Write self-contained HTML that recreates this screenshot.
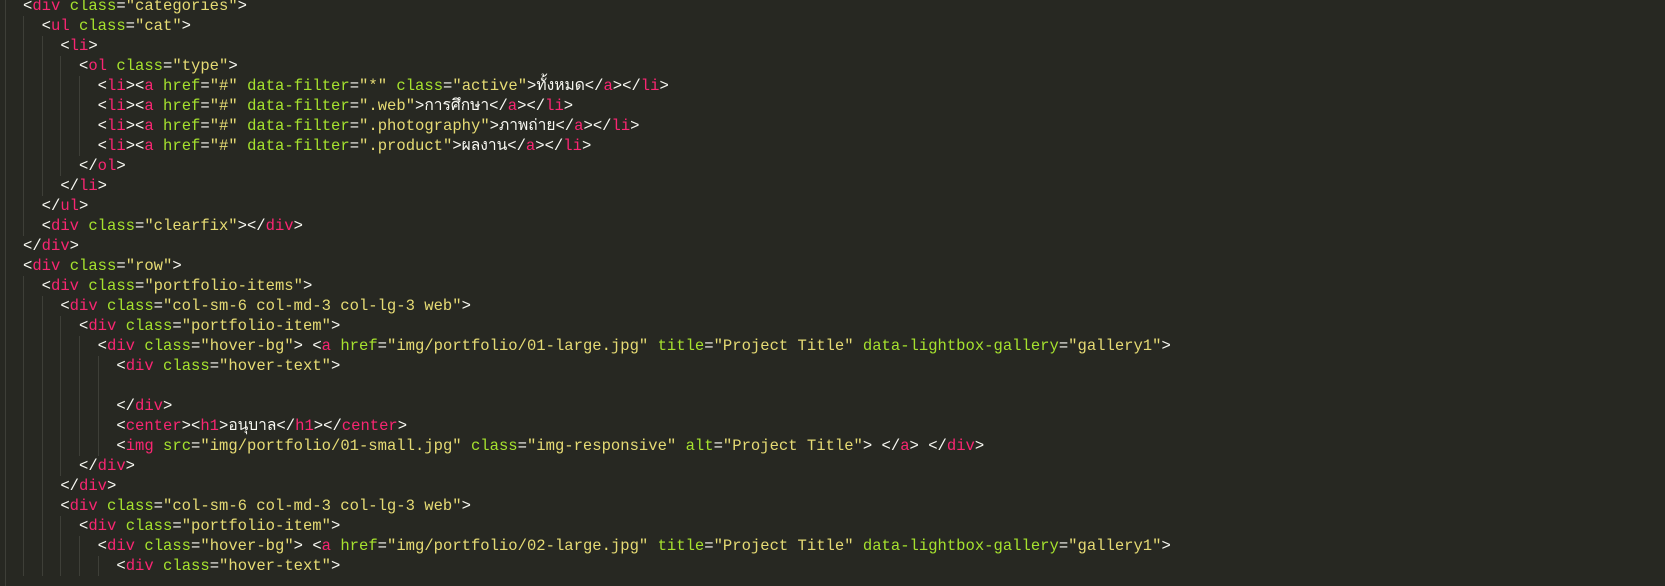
<!DOCTYPE html>
<html><head><meta charset="utf-8"><style>
html,body{margin:0;padding:0;background:#272822;width:1665px;height:586px;overflow:hidden}
#c{position:absolute;left:0;top:-4px;width:1665px}
.l{height:20px;line-height:20px;white-space:pre;font-family:"Liberation Mono","DejaVu Sans Mono",monospace;font-size:15.56px;color:#f8f8f2;position:relative}
.g{position:absolute;top:0;height:20px;width:1px;background:#3e3f38}
.t{color:#f92672}.a{color:#a6e22e}.s{color:#e6db74}
</style></head><body>
<div class="g" style="left:5px;top:0;height:586px;position:absolute"></div>
<div id="c"></div>
<script>
const L=[
[0,'&lt;<span class=t>div</span> <span class=a>class</span>=<span class=s>"categories"</span>&gt;'],
[1,'&lt;<span class=t>ul</span> <span class=a>class</span>=<span class=s>"cat"</span>&gt;'],
[2,'&lt;<span class=t>li</span>&gt;'],
[3,'&lt;<span class=t>ol</span> <span class=a>class</span>=<span class=s>"type"</span>&gt;'],
[4,'&lt;<span class=t>li</span>&gt;&lt;<span class=t>a</span> <span class=a>href</span>=<span class=s>"#"</span> <span class=a>data-filter</span>=<span class=s>"*"</span> <span class=a>class</span>=<span class=s>"active"</span>&gt;ทั้งหมด&lt;/<span class=t>a</span>&gt;&lt;/<span class=t>li</span>&gt;'],
[4,'&lt;<span class=t>li</span>&gt;&lt;<span class=t>a</span> <span class=a>href</span>=<span class=s>"#"</span> <span class=a>data-filter</span>=<span class=s>".web"</span>&gt;การศึกษา&lt;/<span class=t>a</span>&gt;&lt;/<span class=t>li</span>&gt;'],
[4,'&lt;<span class=t>li</span>&gt;&lt;<span class=t>a</span> <span class=a>href</span>=<span class=s>"#"</span> <span class=a>data-filter</span>=<span class=s>".photography"</span>&gt;ภาพถ่าย&lt;/<span class=t>a</span>&gt;&lt;/<span class=t>li</span>&gt;'],
[4,'&lt;<span class=t>li</span>&gt;&lt;<span class=t>a</span> <span class=a>href</span>=<span class=s>"#"</span> <span class=a>data-filter</span>=<span class=s>".product"</span>&gt;ผลงาน&lt;/<span class=t>a</span>&gt;&lt;/<span class=t>li</span>&gt;'],
[3,'&lt;/<span class=t>ol</span>&gt;'],
[2,'&lt;/<span class=t>li</span>&gt;'],
[1,'&lt;/<span class=t>ul</span>&gt;'],
[1,'&lt;<span class=t>div</span> <span class=a>class</span>=<span class=s>"clearfix"</span>&gt;&lt;/<span class=t>div</span>&gt;'],
[0,'&lt;/<span class=t>div</span>&gt;'],
[0,'&lt;<span class=t>div</span> <span class=a>class</span>=<span class=s>"row"</span>&gt;'],
[1,'&lt;<span class=t>div</span> <span class=a>class</span>=<span class=s>"portfolio-items"</span>&gt;'],
[2,'&lt;<span class=t>div</span> <span class=a>class</span>=<span class=s>"col-sm-6 col-md-3 col-lg-3 web"</span>&gt;'],
[3,'&lt;<span class=t>div</span> <span class=a>class</span>=<span class=s>"portfolio-item"</span>&gt;'],
[4,'&lt;<span class=t>div</span> <span class=a>class</span>=<span class=s>"hover-bg"</span>&gt; &lt;<span class=t>a</span> <span class=a>href</span>=<span class=s>"img/portfolio/01-large.jpg"</span> <span class=a>title</span>=<span class=s>"Project Title"</span> <span class=a>data-lightbox-gallery</span>=<span class=s>"gallery1"</span>&gt;'],
[5,'&lt;<span class=t>div</span> <span class=a>class</span>=<span class=s>"hover-text"</span>&gt;'],
[5,''],
[5,'&lt;/<span class=t>div</span>&gt;'],
[5,'&lt;<span class=t>center</span>&gt;&lt;<span class=t>h1</span>&gt;อนุบาล&lt;/<span class=t>h1</span>&gt;&lt;/<span class=t>center</span>&gt;'],
[5,'&lt;<span class=t>img</span> <span class=a>src</span>=<span class=s>"img/portfolio/01-small.jpg"</span> <span class=a>class</span>=<span class=s>"img-responsive"</span> <span class=a>alt</span>=<span class=s>"Project Title"</span>&gt; &lt;/<span class=t>a</span>&gt; &lt;/<span class=t>div</span>&gt;'],
[3,'&lt;/<span class=t>div</span>&gt;'],
[2,'&lt;/<span class=t>div</span>&gt;'],
[2,'&lt;<span class=t>div</span> <span class=a>class</span>=<span class=s>"col-sm-6 col-md-3 col-lg-3 web"</span>&gt;'],
[3,'&lt;<span class=t>div</span> <span class=a>class</span>=<span class=s>"portfolio-item"</span>&gt;'],
[4,'&lt;<span class=t>div</span> <span class=a>class</span>=<span class=s>"hover-bg"</span>&gt; &lt;<span class=t>a</span> <span class=a>href</span>=<span class=s>"img/portfolio/02-large.jpg"</span> <span class=a>title</span>=<span class=s>"Project Title"</span> <span class=a>data-lightbox-gallery</span>=<span class=s>"gallery1"</span>&gt;'],
[5,'&lt;<span class=t>div</span> <span class=a>class</span>=<span class=s>"hover-text"</span>&gt;']
];
const step=18.67,x0=23;let h='';
for(const [i,t] of L){let g='';for(let k=1;k<=i;k++)g+='<div class="g" style="left:'+(x0+(k-1)*step)+'px"></div>';
h+='<div class="l">'+g+'<span style="position:absolute;left:'+(x0+i*step)+'px">'+t+'</span></div>';}
document.getElementById('c').innerHTML=h;
</script>
</body></html>
